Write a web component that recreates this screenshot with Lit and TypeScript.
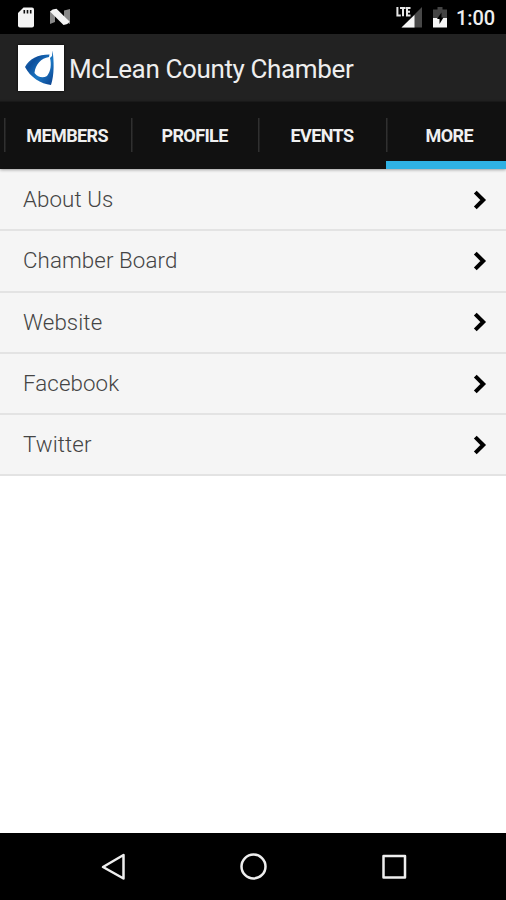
import { LitElement, html, css } from "lit";
import { customElement, property } from "lit/decorators.js";

@customElement("status-bar")
class StatusBar extends LitElement {
  static styles = css`
    :host { display: flex; align-items: center; height: 34px; flex: none; background: #000; color: #eee; padding: 0 11px 0 17px; }
    .sd { width: 17px; height: 21px; }
    .n { width: 22px; height: 18px; margin-left: 15px; }
    .gap { flex: 1; }
    .signal { width: 26px; height: 22px; margin-right: 11px; }
    .battery { width: 14px; height: 21px; margin-right: 9px; }
    .time { font: 500 20px/34px Roboto, sans-serif; letter-spacing: -0.1px; padding-top: 2px; }
  `;
  render() {
    return html`
      <svg class="sd" viewBox="0 0 17 21">
        <path fill="#f4f4f4" d="M6.5 .5H15a2 2 0 0 1 2 2v16a2 2 0 0 1-2 2H3a2 2 0 0 1-2-2V6z" />
        <path stroke="#111" stroke-width="1.6" d="M7.3 3v3.500M10.500 3v3.500M13.700 3v3.500" />
      </svg>
      <svg class="n" viewBox="0 0 22 18">
        <path fill="#888" d="M1 3l5 3v8l-5 2zM15 2.500l6-1.500v15l-6-3z" />
        <path fill="#f4f4f4" d="M1 3.500Q3 1 7.500 .8L20.500 13.500Q19 16.500 14.500 17z" />
      </svg>
      <div class="gap"></div>
      <svg class="signal" viewBox="0 0 26 22">
        <path fill="#484848" d="M26 1v20.500H5.500z" />
        <path fill="#f6f6f6" d="M18.500 9v12.500H5.500z" />
        <path fill="none" stroke="#000" stroke-width="4" d="M1.500 1v8.500h3.500M4 2.300h5M7 2v8M14.500 2.300H11v7.200h3.500M11 5.700h3" />
        <path fill="none" stroke="#e6e6e6" stroke-width="2" d="M1.400 1v8.400h3.400M4 2h5.600M7 2v8.200M14.500 2H11v7.400h3.500M11 5.700h3" />
      </svg>
      <svg class="battery" viewBox="0 0 14 21">
        <path fill="#444" d="M4.500 0h5v2.500H14V11H0V2.500h4.500z" />
        <path fill="#f6f6f6" d="M0 11h14v9.500H0z" />
        <path fill="#000" d="M8.500 5.500l-4.500 6.500h2.500v5L10.500 10.500H8.500z" />
      </svg>
      <span class="time">1:00</span>
    `;
  }
}

@customElement("tab-strip")
class TabStrip extends LitElement {
  static styles = css`
    :host { display: grid; grid-template-columns: 3.500px 127.400px 127.400px 127.400px 1fr; flex: none; height: 68px; box-sizing: border-box; background: #111; border-top: 1px solid #191919; box-shadow: 0 1px 3px #0005; position: relative; }
    .tab { display: flex; flex-direction: column; overflow: hidden; align-items: center; color: #f0f0f0; font: 700 18px/68px Roboto, sans-serif; letter-spacing: -0.600px; white-space: nowrap;
      background: linear-gradient(#303030, #303030) 0 16px / 1.500px 34px no-repeat; }
    .label { height: 58px; }
    .tab.last { padding-left: 7px; }
    .active { background: linear-gradient(#2fb1e3, #2fb1e3) 0 100% / 100% 8px no-repeat, linear-gradient(#303030, #303030) 0 16px / 1.500px 34px no-repeat; }
  `;
  render() {
    const tabs = ["MEMBERS", "PROFILE", "EVENTS", "MORE"];
    return html`<span></span>${tabs.map(
      (t) => html`<div class="tab ${t === "MORE" ? "last active" : ""}"><span class="label">${t}</span></div>`
    )}`;
  }
}

@customElement("menu-row")
class MenuRow extends LitElement {
  @property() label = "";
  static styles = css`
    :host { display: flex; align-items: center; justify-content: space-between; height: 61.300px; box-sizing: border-box; padding: 0 19px 0 23px; background: #f5f5f5; border-bottom: 2px solid #e3e3e3; }
    .label { font: 300 22.300px/60px Roboto, sans-serif; color: #444; letter-spacing: 0.1px; margin-top: -1px; }
    svg { width: 14px; height: 20px; }
  `;
  render() {
    return html`<span class="label">${this.label}</span>
      <svg viewBox="0 0 14 20"><path fill="none" stroke="#000" stroke-width="4" d="M2.300 2.200L10.200 10L2.300 17.800" /></svg>`;
  }
}

@customElement("app-root")
class AppRoot extends LitElement {
  static styles = css`
    :host { display: flex; flex-direction: column; height: 900px; background: #fff; overflow: hidden; }
    .header { display: flex; align-items: center; flex: none; height: 67px; background: #222; padding-left: 18px; gap: 5px; }
    .logo { width: 46px; height: 46px; background: #fff; box-shadow: 0 0 2px #000; }
    .title { font: 400 26px/68px Roboto, sans-serif; letter-spacing: -0.370px; color: #eee; white-space: nowrap; padding-top: 3px; }
    .list { flex: 1; border-top: 1px solid #eee; }
    .nav { display: flex; flex: none; height: 67px; background: #000; justify-content: center; align-items: center; }
    .nav svg { width: 506px; height: 67px; }
  `;
  render() {
    return html`
      <status-bar></status-bar>
      <div class="header">
        <svg class="logo" viewBox="0 0 46 46">
          <defs>
            <linearGradient id="blue" x1="0" y1="0" x2="1" y2="1">
              <stop offset="0" stop-color="#3384c4" />
              <stop offset=".3" stop-color="#0e4f9c" />
              <stop offset=".6" stop-color="#1c78c4" />
              <stop offset="1" stop-color="#0a3f8c" />
            </linearGradient>
          </defs>
          <path fill="url(#blue)" d="M7 22C11 14 20 9.500 31.500 9.500L31 12C23 13.500 17.500 19 16.500 28C20 32.500 25 33.500 29 31C33 26 33.500 19 32 13L34 11L34.500 5.500C36 15 36.500 30 33 40C23 39 12 32 7 22z" />
        </svg>
        <span class="title">McLean County Chamber</span>
      </div>
      <tab-strip></tab-strip>
      <div class="list">
        ${["About Us", "Chamber Board", "Website", "Facebook", "Twitter"].map(
          (label) => html`<menu-row label=${label}></menu-row>`
        )}
      </div>
      <div class="nav">
        <svg viewBox="0 0 506 67" fill="none" stroke="#eee" stroke-width="2.500" stroke-linejoin="round">
          <path d="M103 34L123.500 22V45.500z" />
          <circle cx="253.500" cy="33.500" r="12" />
          <rect x="383.500" y="23" width="21.500" height="21.500" />
        </svg>
      </div>
    `;
  }
}
